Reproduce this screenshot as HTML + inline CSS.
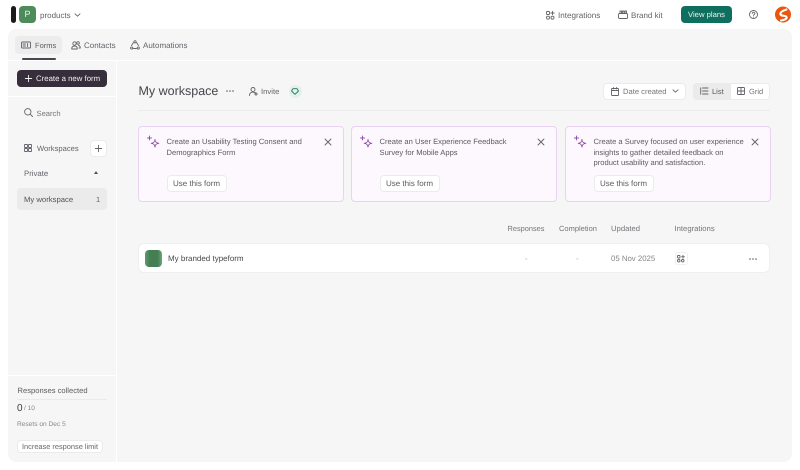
<!DOCTYPE html>
<html lang="en"><head><meta charset="utf-8"><title>My workspace</title>
<style>
*{box-sizing:border-box}
html,body{margin:0;padding:0}
body{width:800px;height:470px;background:#fff;overflow:hidden;position:relative;font-family:"Liberation Sans",sans-serif;color:#5e5a60;font-size:7.8px;text-rendering:geometricPrecision;filter:blur(.25px)}
.a{position:absolute;white-space:nowrap}
svg{position:absolute;overflow:visible;fill:none;stroke:#66626a;stroke-width:.9;stroke-linecap:round;stroke-linejoin:round}
.btn{position:absolute;background:#fff;border:1px solid #ebebeb;border-radius:4px;display:flex;align-items:center;justify-content:center;white-space:nowrap}
.card{position:absolute;top:126px;width:206px;height:76px;background:#fcf8fe;border:1.5px solid #ead2f3;border-radius:4px}
.ct{position:absolute;left:27.5px;top:10px;white-space:nowrap;line-height:10.7px;font-size:7.6px;color:#5e5a60}
.use{left:27.5px;top:48px;width:60px;height:17px;color:#5e5a60;font-size:8px}
</style></head><body>

<!-- top bar -->
<div class="a" style="left:11px;top:6px;width:5px;height:17px;background:#1c1a1d;border-radius:3px"></div>
<div class="a" style="left:19px;top:6px;width:17px;height:17px;background:#4d8b5a;border-radius:4px;color:#e8f2ea;font-size:9px;line-height:17px;text-align:center">P</div>
<div class="a" style="left:40px;top:10.5px;font-size:8px;color:#66626a">products</div>
<svg style="left:74px;top:13px" width="7" height="4"><path d="M1 .8l2.500 2.400L6 .8"/></svg>

<svg style="left:546px;top:11px" width="9" height="9"><rect x=".5" y=".5" width="3" height="3" rx=".7"/><path d="M6.500.3v3.400M4.800 2h3.400"/><rect x=".5" y="5.200" width="3" height="3" rx="1.400"/><rect x="5" y="5.200" width="3" height="3" rx="1.400"/></svg>
<div class="a" style="left:558px;top:10.5px;font-size:8.1px;color:#66626a">Integrations</div>
<svg style="left:618px;top:10px" width="10" height="9"><rect x=".5" y="3.500" width="9" height="5" rx="1"/><path d="M2 3.500V1h1.500v2.500M4.500 3.500V1H6v2.500M7 3.500V1h1.500v2.500"/></svg>
<div class="a" style="left:631px;top:10.5px;font-size:8px;color:#66626a">Brand kit</div>
<div class="a" style="left:681px;top:6px;width:51px;height:17px;background:#0f6f5f;border-radius:4px;color:#e8f3f0;text-align:center;line-height:18px;font-size:7.7px">View plans</div>
<svg style="left:749px;top:10px" width="9" height="9"><circle cx="4.500" cy="4.500" r="4"/><path d="M3.200 3.500c0-1.700 2.700-1.700 2.700 0 0 1-1.400 1-1.400 2M4.500 7v.1"/></svg>
<svg style="left:775px;top:6px" width="17" height="17"><circle cx="8" cy="8.500" r="8" fill="#e9570f" stroke="none"/><path d="M11.500 3.500C8 4.500 4.500 6.500 5.500 8.500s5 .5 6 2.500-2.500 3-5.500 3.500" stroke="#fff" stroke-width="2"/></svg>

<!-- shell -->
<div class="a" style="left:8px;top:29px;width:784px;height:433px;background:#f6f6f6;border-radius:8px"></div>
<div class="a" style="left:8px;top:60px;width:784px;height:1px;background:#fff"></div>
<div class="a" style="left:116px;top:61px;width:1px;height:401px;background:#fff"></div>
<div class="a" style="left:8px;top:96px;width:108px;height:1px;background:#fff"></div>
<div class="a" style="left:8px;top:375px;width:108px;height:1px;background:#fff"></div>

<!-- tabs -->
<div class="a" style="left:15px;top:36px;width:47px;height:18px;background:#ececec;border-radius:4px"></div>
<div class="a" style="left:22px;top:58px;width:34px;height:2px;background:#4a4650;border-radius:1px"></div>
<svg style="left:21px;top:41px" width="10" height="8"><rect x=".5" y="1" width="9" height="6" rx=".8"/><path d="M6.500 2.500v3M2 3h2.500M2 5h2.500"/></svg>
<div class="a" style="left:35px;top:40.5px;font-size:7.5px;color:#5e5a60">Forms</div>
<svg style="left:71px;top:41px" width="10" height="9"><circle cx="3.500" cy="2.500" r="1.700"/><circle cx="7" cy="2" r="1.300"/><path d="M.7 8c0-2 1.200-3 2.800-3s2.800 1 2.800 3zM7.500 4.500c1 .1 1.800 1 1.800 2.500H8"/></svg>
<div class="a" style="left:84px;top:40.5px;font-size:8px;color:#66626a">Contacts</div>
<svg style="left:130px;top:40px" width="10" height="10"><circle cx="5" cy="1.800" r="1.100"/><circle cx="1.700" cy="8" r="1.100"/><circle cx="8.300" cy="8" r="1.100"/><path d="M3.500 2.500L1.500 5.500M6.500 2.500l2 3M3.500 8.500h3"/></svg>
<div class="a" style="left:143px;top:40.5px;font-size:8px;color:#66626a">Automations</div>

<!-- sidebar -->
<div class="a" style="left:17px;top:70px;width:90px;height:17px;background:#362e3a;border-radius:4px;color:#f1eff2;font-size:7.8px;line-height:17px;padding-left:19px">Create a new form</div>
<svg style="left:25px;top:75px;stroke:#f1eff2" width="7" height="7"><path d="M3.500.3v6.400M.3 3.500h6.400"/></svg>
<svg style="left:24px;top:108px" width="9" height="9"><circle cx="3.800" cy="3.800" r="3.200"/><path d="M6.200 6.200l2.300 2.300"/></svg>
<div class="a" style="left:36.500px;top:108.500px;font-size:7.6px;color:#77737a">Search</div>

<svg style="left:24px;top:144px" width="8" height="8"><rect x=".5" y=".5" width="3" height="3" rx=".5"/><rect x="4.500" y=".5" width="3" height="3" rx=".5"/><rect x=".5" y="4.500" width="3" height="3" rx=".5"/><rect x="4.500" y="4.500" width="3" height="3" rx=".5"/></svg>
<div class="a" style="left:37px;top:143.500px;font-size:7.6px;color:#66626a">Workspaces</div>
<div class="btn" style="left:90px;top:140px;width:17px;height:17px"></div>
<svg style="left:95px;top:145px" width="7" height="7"><path d="M3.500.3v6.400M.3 3.500h6.400"/></svg>
<div class="a" style="left:24px;top:168.500px;color:#66626a">Private</div>
<div class="a" style="left:94px;top:171px;width:0;height:0;border-left:2.500px solid transparent;border-right:2.500px solid transparent;border-bottom:3px solid #55515a"></div>
<div class="a" style="left:17px;top:188px;width:90px;height:22px;background:#ebebeb;border-radius:4px"></div>
<div class="a" style="left:24px;top:194.500px;font-size:7.7px;color:#55515a">My workspace</div>
<div class="a" style="left:96px;top:194.500px;font-size:7.500px;color:#66626a">1</div>

<div class="a" style="left:17.500px;top:386px;font-size:7.6px;color:#5e5a60">Responses collected</div>
<div class="a" style="left:17px;top:399px;width:90px;height:1px;background:#eaeaea"></div>
<div class="a" style="left:17px;top:403px;font-size:10px;color:#3f3b42">0</div>
<div class="a" style="left:24px;top:405px;font-size:6.500px;color:#8a868c">/ 10</div>
<div class="a" style="left:17px;top:421px;font-size:6.600px;color:#8a868c">Resets on Dec 5</div>
<div class="btn" style="left:17px;top:440px;width:86px;height:13px;font-size:7.400px;color:#66626a">Increase response limit</div>

<!-- header -->
<div class="a" style="left:138.500px;top:84px;font-size:12.500px;color:#47434a">My workspace</div>
<svg style="left:226px;top:90px;fill:#5e5a60;stroke:none" width="8" height="2"><circle cx="1" cy="1" r=".8"/><circle cx="4" cy="1" r=".8"/><circle cx="7" cy="1" r=".8"/></svg>
<svg style="left:249px;top:87px" width="9" height="9"><circle cx="4" cy="2.500" r="2"/><path d="M.5 8.500c0-2.200 1.500-3.300 3.500-3.300 1 0 1.700.2 2.300.7M7 5.500v3M5.500 7h3"/></svg>
<div class="a" style="left:261px;top:87px;font-size:7.700px;color:#66626a">Invite</div>
<div class="a" style="left:289px;top:85px;width:13px;height:13px;background:#e3f0ec;border-radius:50%"></div>
<svg style="left:291px;top:88px;stroke:#1c7a63" width="8" height="7"><path d="M2 .7h4l1.500 2.300L4 6.300.5 3z"/></svg>
<div class="a" style="left:138px;top:110px;width:632px;height:1px;background:#ebebeb"></div>

<div class="btn" style="left:603px;top:83px;width:83px;height:17px"></div>
<svg style="left:611px;top:87px" width="8" height="9"><rect x=".5" y="1.500" width="7" height="7" rx=".8"/><path d="M.5 3.500h7M2.500.5v1.500M5.500.5v1.500"/></svg>
<div class="a" style="left:623px;top:87px;font-size:7.600px;color:#77737a">Date created</div>
<svg style="left:672px;top:89px" width="7" height="4"><path d="M1 .8l2.500 2.400L6 .8"/></svg>

<div class="a" style="left:693px;top:83px;width:77px;height:17px;background:#fff;border:1px solid #ebebeb;border-radius:4px"></div>
<div class="a" style="left:693px;top:83px;width:38px;height:17px;background:#ebebeb;border-radius:4px 0 0 4px"></div>
<svg style="left:700px;top:87px" width="8" height="8"><path d="M.7.800v6.400M2.500 1H8M2.500 4H8M2.500 7H8"/></svg>
<div class="a" style="left:712px;top:87px;font-size:7.500px;color:#5e5a60">List</div>
<svg style="left:737px;top:87px" width="8" height="8"><rect x=".5" y=".5" width="7" height="7" rx=".8"/><path d="M4 .5v7M.5 4h7"/></svg>
<div class="a" style="left:749px;top:87px;font-size:7.500px;color:#77737a">Grid</div>

<!-- cards -->
<div class="card" style="left:138px">
 <svg style="left:8px;top:9px;stroke:#8f4aa8" width="13" height="13"><path d="M2.500 0v4M.5 2h4M8 3.500c.2 2.500 1.200 3.500 3.800 3.800-2.600.3-3.600 1.300-3.800 3.800-.2-2.500-1.200-3.500-3.800-3.800 2.600-.3 3.600-1.300 3.800-3.800z"/></svg>
 <div class="ct">Create an Usability Testing Consent and<br>Demographics Form</div>
 <svg style="left:185px;top:11px" width="8" height="8"><path d="M1 1l6 6M7 1L1 7"/></svg>
 <div class="btn use">Use this form</div>
</div>
<div class="card" style="left:351px">
 <svg style="left:8px;top:9px;stroke:#8f4aa8" width="13" height="13"><path d="M2.500 0v4M.5 2h4M8 3.500c.2 2.500 1.200 3.500 3.800 3.800-2.600.3-3.600 1.300-3.800 3.800-.2-2.500-1.200-3.500-3.800-3.800 2.600-.3 3.600-1.300 3.800-3.800z"/></svg>
 <div class="ct">Create an User Experience Feedback<br>Survey for Mobile Apps</div>
 <svg style="left:185px;top:11px" width="8" height="8"><path d="M1 1l6 6M7 1L1 7"/></svg>
 <div class="btn use">Use this form</div>
</div>
<div class="card" style="left:565px">
 <svg style="left:8px;top:9px;stroke:#8f4aa8" width="13" height="13"><path d="M2.500 0v4M.5 2h4M8 3.500c.2 2.500 1.200 3.500 3.800 3.800-2.600.3-3.600 1.300-3.800 3.800-.2-2.500-1.200-3.500-3.800-3.800 2.600-.3 3.600-1.300 3.800-3.800z"/></svg>
 <div class="ct">Create a Survey focused on user experience<br>insights to gather detailed feedback on<br>product usability and satisfaction.</div>
 <svg style="left:185px;top:11px" width="8" height="8"><path d="M1 1l6 6M7 1L1 7"/></svg>
 <div class="btn use">Use this form</div>
</div>

<!-- table -->
<div class="a" style="left:507.500px;top:223.500px;font-size:7.400px;color:#77737a">Responses</div>
<div class="a" style="left:559px;top:223.500px;font-size:7.500px;color:#77737a">Completion</div>
<div class="a" style="left:611px;top:223.500px;font-size:7.700px;color:#77737a">Updated</div>
<div class="a" style="left:674.500px;top:223.500px;font-size:7.700px;color:#77737a">Integrations</div>

<div class="a" style="left:138px;top:243px;width:632px;height:30px;background:#fff;border:1px solid #efefef;border-radius:6px"></div>
<div class="a" style="left:145px;top:250px;width:17px;height:17px;background:linear-gradient(90deg,#5d9a6c 0,#437f52 30%,#437f52 75%,#6da57a 100%);border-radius:4px"></div>
<div class="a" style="left:168px;top:253.500px;font-size:8px;color:#4a464d">My branded typeform</div>
<div class="a" style="left:525px;top:253.500px;color:#a8a5aa">-</div>
<div class="a" style="left:576px;top:253.500px;color:#a8a5aa">-</div>
<div class="a" style="left:611px;top:253.500px;color:#88848a">05 Nov 2025</div>
<div class="a" style="left:675px;top:252px;width:13px;height:13px;border:1px solid #efefef;border-radius:3px"></div>
<svg style="left:677px;top:254.500px" width="8" height="8"><rect x=".5" y=".5" width="2.500" height="2.500" rx=".6"/><path d="M6 .3v3M4.500 1.800h3"/><rect x=".5" y="4.500" width="2.500" height="2.500" rx="1.200"/><rect x="4.500" y="4.500" width="2.500" height="2.500" rx="1.200"/></svg>
<svg style="left:749px;top:258px;fill:#5e5a60;stroke:none" width="8" height="2"><circle cx="1" cy="1" r=".8"/><circle cx="4" cy="1" r=".8"/><circle cx="7" cy="1" r=".8"/></svg>
</body></html>
